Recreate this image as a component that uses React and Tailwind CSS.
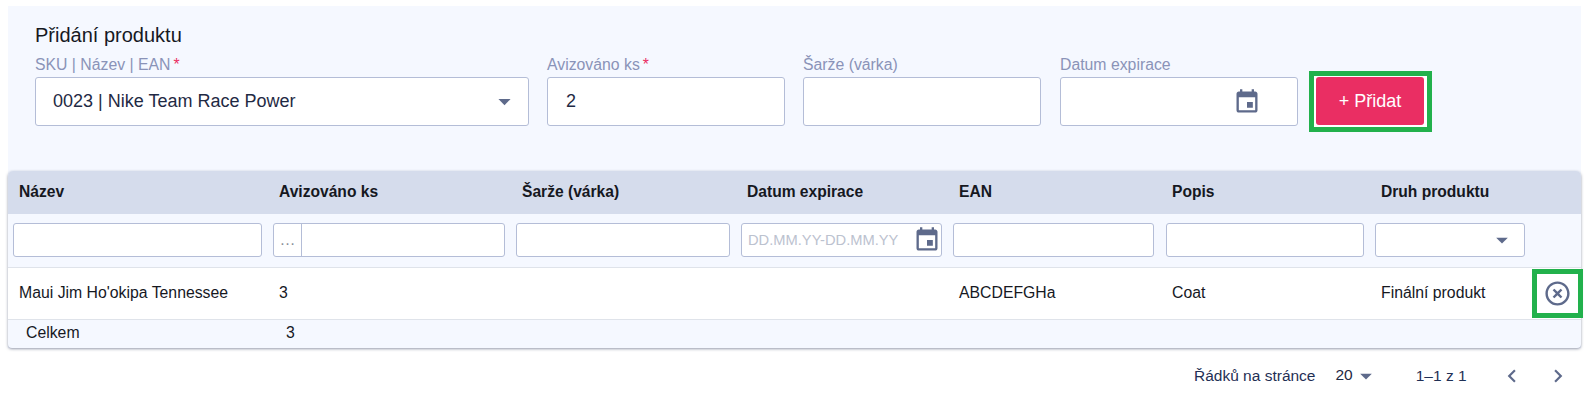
const EVENT = "M17 12h-5v5h5v-5zM16 1v2H8V1H6v2H5c-1.11 0-1.99.9-1.99 2L3 19c0 1.1.89 2 2 2h14c1.1 0 2-.9 2-2V5c0-1.1-.9-2-2-2h-1V1h-2zm3 18H5V8h14v11z";
const ARROW = "M7 10l5 5 5-5z";
const CANCEL = "M14.59 8L12 10.59 9.41 8 8 9.41 10.59 12 8 14.59 9.41 16 12 13.41 14.59 16 16 14.59 13.41 12 16 9.41 14.59 8zM12 2C6.47 2 2 6.47 2 12s4.47 10 10 10 10-4.47 10-10S17.53 2 12 2zm0 18c-4.41 0-8-3.59-8-8s3.59-8 8-8 8 3.59 8 8-3.59 8-8 8z";
const LEFT = "M15.41 7.41L14 6l-6 6 6 6 1.41-1.41L10.83 12z";
const RIGHT = "M10 6L8.59 7.41 13.17 12l-4.58 4.59L10 18l6-6z";

function Icon({ d, className }) {
  return (
    <svg viewBox="0 0 24 24" className={className} fill="#5e6a8b">
      <path d={d} />
    </svg>
  );
}

function Field({ label, required, width, children }) {
  return (
    <div className={`flex flex-col ${width}`}>
      <div className="h-[23px] text-[15.8px] leading-[22px] text-[#8a93b8] whitespace-nowrap">
        {label}
        {required && <span className="ml-[3px] text-[#ea2e63]">*</span>}
      </div>
      {children}
    </div>
  );
}

const box = "h-[49px] w-full rounded-[3px] border border-[#b4bdd7] bg-white flex items-center";
const filter = "h-[34px] rounded-[3px] border border-[#b4bdd7] bg-white flex items-center";

const heads = ["Název", "Avizováno ks", "Šarže (várka)", "Datum expirace", "EAN", "Popis", "Druh produktu", ""];

export default function App() {
  return (
    <div className="w-[1588px] h-[404px] bg-white overflow-hidden pt-[6px] pl-[8px] font-['Liberation_Sans',Arial,sans-serif] text-[#1f2a44]">
      <div className="w-[1573px] bg-[#f5f8ff]">
        <section className="h-[165px] pl-[27px] pt-[17px]">
          <h2 className="h-[31px] text-[20px] leading-[24px] text-[#16181f]">Přidání produktu</h2>
          <div className="flex items-start">
            <Field label="SKU | Název | EAN" required width="w-[494px]">
              <div className={`${box} pl-[17px] pr-[9px] justify-between`}>
                <span className="text-[18px]">0023 | Nike Team Race Power</span>
                <Icon d={ARROW} className="w-[29px] h-[29px]" />
              </div>
            </Field>
            <Field label="Avizováno ks" required width="w-[238px] ml-[18px]">
              <div className={`${box} pl-[18px] text-[18px]`}>2</div>
            </Field>
            <Field label="Šarže (várka)" width="w-[238px] ml-[18px]">
              <div className={box} />
            </Field>
            <Field label="Datum expirace" width="w-[238px] ml-[19px]">
              <div className={`${box} justify-end pr-[36px]`}>
                <Icon d={EVENT} className="w-[28px] h-[28px]" />
              </div>
            </Field>
            <div className="ml-[11px] mt-[17px] border-[5px] border-[#22b14c] bg-white pl-[2px] pr-[3px] pt-[1px] pb-[2px]">
              <button className="w-[108px] h-[48px] rounded-[3px] bg-[#ea2e63] text-white text-[18px]">+ Přidat</button>
            </div>
          </div>
        </section>

        <div className="rounded-t-[5px] rounded-b-[4px] shadow-[0_1px_3px_rgba(60,70,100,0.55)] bg-[#f5f8ff]">
          <table className="w-[1573px] table-fixed border-collapse text-[15.8px]">
            <colgroup>
              <col className="w-[260px]" />
              <col className="w-[243px]" />
              <col className="w-[225px]" />
              <col className="w-[212px]" />
              <col className="w-[213px]" />
              <col className="w-[209px]" />
              <col className="w-[161px]" />
              <col className="w-[50px]" />
            </colgroup>
            <thead>
              <tr className="h-[43px] bg-[#d5dcec] text-[#16181f]">
                {heads.map((h, i) => (
                  <th key={i} className={`pl-[11px] pb-[1px] text-left font-bold text-[15.6px] ${i === 0 ? "rounded-tl-[5px]" : ""} ${i === 7 ? "rounded-tr-[5px]" : ""}`}>{h}</th>
                ))}
              </tr>
              <tr className="h-[53px] border-b border-[#dfe3ea]">
                <th className="pl-[5px] pr-[6px] pb-[1px] font-normal"><div className={filter} /></th>
                <th className="pl-[5px] pr-[6px] pb-[1px] font-normal">
                  <div className={filter}>
                    <span className="w-[28px] h-full border-r border-[#b4bdd7] flex items-center justify-center text-[#8b8f99] text-[16px]">…</span>
                  </div>
                </th>
                <th className="pl-[5px] pr-[6px] pb-[1px] font-normal"><div className={filter} /></th>
                <th className="pl-[5px] pr-[6px] pb-[1px] font-normal">
                  <div className={`${filter} pl-[6px] justify-between`}>
                    <span className="text-[14.7px] text-[#bcc2cf] whitespace-nowrap">DD.MM.YY-DD.MM.YY</span>
                    <Icon d={EVENT} className="w-[28px] h-[28px] shrink-0" />
                  </div>
                </th>
                <th className="pl-[5px] pr-[7px] pb-[1px] font-normal"><div className={filter} /></th>
                <th className="pl-[5px] pr-[6px] pb-[1px] font-normal"><div className={filter} /></th>
                <th className="pl-[5px] pr-[6px] pb-[1px] font-normal">
                  <div className={`${filter} justify-end pr-[8px]`}>
                    <Icon d={ARROW} className="w-[28px] h-[28px]" />
                  </div>
                </th>
                <th />
              </tr>
            </thead>
            <tbody>
              <tr className="h-[52px] bg-white border-b border-[#dfe3ea] text-[#16181f]">
                <td className="pl-[11px]">Maui Jim Ho'okipa Tennessee</td>
                <td className="pl-[11px]">3</td>
                <td />
                <td />
                <td className="pl-[11px]">ABCDEFGHa</td>
                <td className="pl-[11px]">Coat</td>
                <td className="pl-[11px]">Finální produkt</td>
                <td className="pl-[1px] p-0">
                  <div className="w-[51px] h-[49px] border-[5px] border-[#22b14c] bg-white flex items-center justify-center">
                    <Icon d={CANCEL} className="w-[29px] h-[29px] shrink-0" />
                  </div>
                </td>
              </tr>
              <tr className="h-[29px] text-[#16181f]">
                <td className="pl-[18px] pb-[2px]">Celkem</td>
                <td className="pl-[18px] pb-[2px]">3</td>
                <td colSpan={6} />
              </tr>
            </tbody>
          </table>
        </div>
      </div>

      <footer className="w-[1573px] mt-[15px] flex items-center h-[26px] text-[15.5px]">
        <span className="ml-[1186px] text-[#1f2f55]">Řádků na stránce</span>
        <span className="ml-[20px] -mt-[2px] text-[#1f2a44]">20</span>
        <Icon d={ARROW} className="-ml-[1px] w-[28px] h-[28px]" />
        <span className="ml-[36px] text-[#1f2f55]">1–1 z 1</span>
        <Icon d={LEFT} className="ml-[32px] w-[26px] h-[26px]" />
        <Icon d={RIGHT} className="ml-[20px] w-[26px] h-[26px]" />
      </footer>
    </div>
  );
}
